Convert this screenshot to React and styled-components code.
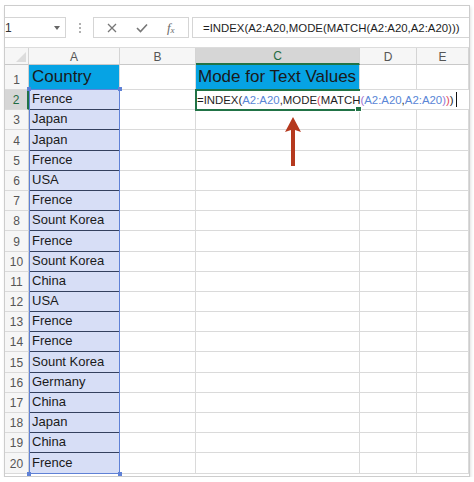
import React from 'react';
import styled, { createGlobalStyle } from 'styled-components';

const Global = createGlobalStyle`
  html, body { margin: 0; padding: 0; background: #ffffff; }
  body { font-family: "Liberation Sans", Arial, sans-serif; }
`;

const Frame = styled.div`
  position: relative;
  margin: 5px 0 0 4px;
  width: 466px;
  height: 472px;
  box-sizing: border-box;
  border: 1px solid #cdcdcd;
  box-shadow: 1px 2px 3px rgba(0, 0, 0, 0.12);
  padding-top: 11px;
  display: flex;
  flex-direction: column;
  overflow: hidden;
  background: #fff;
`;

const FormulaBar = styled.div`
  display: flex;
  height: 21px;
  align-items: stretch;
`;

const NameBox = styled.div`
  width: 60px;
  box-sizing: content-box;
  border: 1px solid #d5d5d5;
  border-left: none;
  display: flex;
  align-items: center;
  justify-content: space-between;
  font-size: 12px;
  color: #333;
`;

const NameText = styled.span`
  line-height: 1;
`;

const DropTri = styled.span`
  width: 0;
  height: 0;
  margin-right: 5px;
  border-left: 3.5px solid transparent;
  border-right: 3.5px solid transparent;
  border-top: 4px solid #666;
`;

const DotsArea = styled.div`
  width: 27px;
  display: flex;
  flex-direction: column;
  align-items: center;
  justify-content: center;
  gap: 2px;
`;

const Dot = styled.span`
  width: 2px;
  height: 2px;
  background: #b0b0b0;
`;

const FxBox = styled.div`
  border: 1px solid #d5d5d5;
  display: flex;
  align-items: center;
  justify-content: space-around;
  padding: 0 4px;
  box-sizing: content-box;
  width: 86px;
`;

const FxText = styled.span`
  font-family: "Liberation Serif", "Times New Roman", serif;
  font-style: italic;
  font-size: 13px;
  color: #6a6a6a;
  line-height: 1;
  sub {
    font-size: 9px;
    vertical-align: -1px;
  }
`;

const FormulaBox = styled.div`
  flex: 1;
  margin-left: 3px;
  border: 1px solid #d5d5d5;
  border-right: none;
  display: flex;
  align-items: center;
  padding-left: 10px;
  font-size: 11.4px;
  color: #1e1e1e;
  white-space: nowrap;
`;

const Sheet = styled.div`
  margin-top: 9px;
  border-top: 1px solid #dcdcdc;
  display: grid;
  grid-template-columns: 24px 91px 76px 164px 57px 52px;
  grid-template-rows: 17px 25px repeat(19, 20.2px);
`;

const Cell = styled.div`
  grid-column: ${p => p.$col};
  grid-row: ${p => p.$row};
  box-sizing: border-box;
  border-right: 1px solid #dadada;
  border-bottom: 1px solid ${p => p.$edgeB || '#dadada'};
  background: ${p => p.$bg || '#fff'};
  display: flex;
  align-items: flex-end;
  padding: 0 0 2px ${p => p.$pl || 3}px;
  font-size: ${p => p.$size || 13}px;
  line-height: ${p => (p.$size ? p.$size + 3 : 15)}px;
  color: #1a1a1a;
  white-space: nowrap;
  overflow: hidden;
`;

const ColHead = styled.div`
  grid-row: 1;
  grid-column: ${p => p.$col};
  box-sizing: border-box;
  border-right: 1px solid #d4d4d4;
  border-bottom: ${p => (p.$active ? '2px solid #217346' : '1px solid #c9c9c9')};
  background: ${p => (p.$active ? '#d6d6d6' : '#f6f6f6')};
  color: ${p => (p.$active ? '#1f6b42' : '#555')};
  font-size: 12px;
  display: flex;
  align-items: center;
  justify-content: center;
  padding-top: 1px;
`;

const Corner = styled.div`
  grid-row: 1;
  grid-column: 1;
  box-sizing: border-box;
  border-right: 1px solid #d4d4d4;
  border-bottom: 1px solid #c9c9c9;
  background: #f6f6f6;
  display: flex;
  align-items: flex-end;
  justify-content: flex-end;
  padding: 0 2px 2px 0;
`;

const CornerTri = styled.span`
  width: 0;
  height: 0;
  border-left: 10px solid transparent;
  border-bottom: 10px solid #dcdcdc;
`;

const RowHead = styled.div`
  grid-column: 1;
  grid-row: ${p => p.$row};
  box-sizing: border-box;
  border-right: ${p => (p.$active ? '2px solid #217346' : '1px solid #cfcfcf')};
  border-bottom: 1px solid #dadada;
  background: ${p => (p.$active ? '#d6d6d6' : '#f6f6f6')};
  color: ${p => (p.$active ? '#1f6b42' : '#555')};
  font-size: 12px;
  display: flex;
  align-items: flex-end;
  justify-content: center;
  padding-bottom: 3px;
  line-height: 12px;
`;

const RefBox = styled.div`
  grid-column: 2;
  grid-row: 3 / 22;
  position: relative;
  box-sizing: border-box;
  border: 1.5px solid #5f81d6;
  margin-top: -1px;
  pointer-events: none;
  z-index: 2;
`;

const Handle = styled.span`
  position: absolute;
  width: 4px;
  height: 4px;
  background: #5f81d6;
  ${p => (p.$t ? 'top: -3px;' : 'bottom: -3px;')}
  ${p => (p.$l ? 'left: -3px;' : 'right: -3px;')}
`;

const EditArea = styled.div`
  grid-column: 4 / 7;
  grid-row: 3;
  background: #fff;
  z-index: 3;
  display: flex;
  align-items: center;
  padding-left: 1px;
  font-size: 11.4px;
  color: #1e1e1e;
  white-space: pre;
  margin-bottom: 1px;
`;

const Ref = styled.span`
  color: ${p => p.$c};
`;

const Caret = styled.span`
  display: inline-block;
  width: 1px;
  height: 15px;
  background: #111;
  margin-left: 2px;
`;

const ActiveBorder = styled.div`
  grid-column: 4;
  grid-row: 3;
  position: relative;
  z-index: 4;
  box-sizing: border-box;
  margin: -1px 0 -1px -1px;
  border: 2px solid #217346;
  border-right: none;
  pointer-events: none;
`;

const FillHandle = styled.span`
  position: absolute;
  right: -2px;
  bottom: -3px;
  width: 5px;
  height: 4px;
  background: #217346;
  border: 1px solid #fff;
`;

const ArrowSvg = styled.svg`
  position: absolute;
  left: 279px;
  top: 110px;
  z-index: 5;
`;

const countries = [
  'Country', 'Frence', 'Japan', 'Japan', 'Frence', 'USA', 'Frence', 'Sount Korea',
  'Frence', 'Sount Korea', 'China', 'USA', 'Frence', 'Frence', 'Sount Korea',
  'Germany', 'China', 'Japan', 'China', 'Frence',
];

const CYAN = '#06a3e4';
const LAV = '#d7def6';
const REF = '#5a86d6';
const PURPLE = '#a06fd0';
const RED = '#e2485a';

export default function App() {
  const rows = [];
  countries.forEach((name, i) => {
    const r = i + 1;
    const gr = r + 1;
    const isHead = r === 1;
    rows.push(<RowHead key={`h${r}`} $row={gr} $active={r === 2}>{r}</RowHead>);
    rows.push(
      <Cell
        key={`a${r}`}
        $col={2}
        $row={gr}
        $bg={isHead ? CYAN : LAV}
        $edgeB={isHead ? '#dadada' : '#34405e'}
        $size={isHead ? 17 : 13}
        $pl={3}
      >
        {name}
      </Cell>
    );
    rows.push(<Cell key={`b${r}`} $col={3} $row={gr} />);
    rows.push(
      <Cell key={`c${r}`} $col={4} $row={gr} $bg={isHead ? CYAN : '#fff'} $size={isHead ? 17 : 13} $pl={2}>
        {isHead ? 'Mode for Text Values' : ''}
      </Cell>
    );
    rows.push(<Cell key={`d${r}`} $col={5} $row={gr} />);
    rows.push(<Cell key={`e${r}`} $col={6} $row={gr} />);
  });

  return (
    <>
      <Global />
      <Frame>
        <FormulaBar>
          <NameBox>
            <NameText>1</NameText>
            <DropTri />
          </NameBox>
          <DotsArea>
            <Dot />
            <Dot />
            <Dot />
          </DotsArea>
          <FxBox>
            <svg width="10" height="10" viewBox="0 0 10 10">
              <path d="M1 1 L9 9 M9 1 L1 9" stroke="#777" strokeWidth="1.3" fill="none" />
            </svg>
            <svg width="12" height="10" viewBox="0 0 12 10">
              <path d="M1 5 L4.5 8.5 L11 1.5" stroke="#777" strokeWidth="1.6" fill="none" />
            </svg>
            <FxText>f<sub>x</sub></FxText>
          </FxBox>
          <FormulaBox>=INDEX(A2:A20,MODE(MATCH(A2:A20,A2:A20)))</FormulaBox>
        </FormulaBar>
        <Sheet>
          <Corner><CornerTri /></Corner>
          <ColHead $col={2}>A</ColHead>
          <ColHead $col={3}>B</ColHead>
          <ColHead $col={4} $active>C</ColHead>
          <ColHead $col={5}>D</ColHead>
          <ColHead $col={6}>E</ColHead>
          {rows}
          <RefBox>
            <Handle $t $l />
            <Handle $t />
            <Handle $l />
            <Handle />
          </RefBox>
          <EditArea>
            =INDEX(<Ref $c={REF}>A2:A20</Ref>,MODE<Ref $c={RED}>(</Ref>MATCH<Ref $c={PURPLE}>(</Ref><Ref $c={REF}>A2:A20</Ref>,<Ref $c={REF}>A2:A20</Ref><Ref $c={PURPLE}>)</Ref><Ref $c={RED}>)</Ref>)<Caret />
          </EditArea>
          <ActiveBorder>
            <FillHandle />
          </ActiveBorder>
        </Sheet>
        <ArrowSvg width="18" height="52" viewBox="0 0 18 52">
          <path d="M9 1 L17 16 L11 14 L11 50 L7 50 L7 14 L1 16 Z" fill="#b5391e" />
        </ArrowSvg>
      </Frame>
    </>
  );
}
